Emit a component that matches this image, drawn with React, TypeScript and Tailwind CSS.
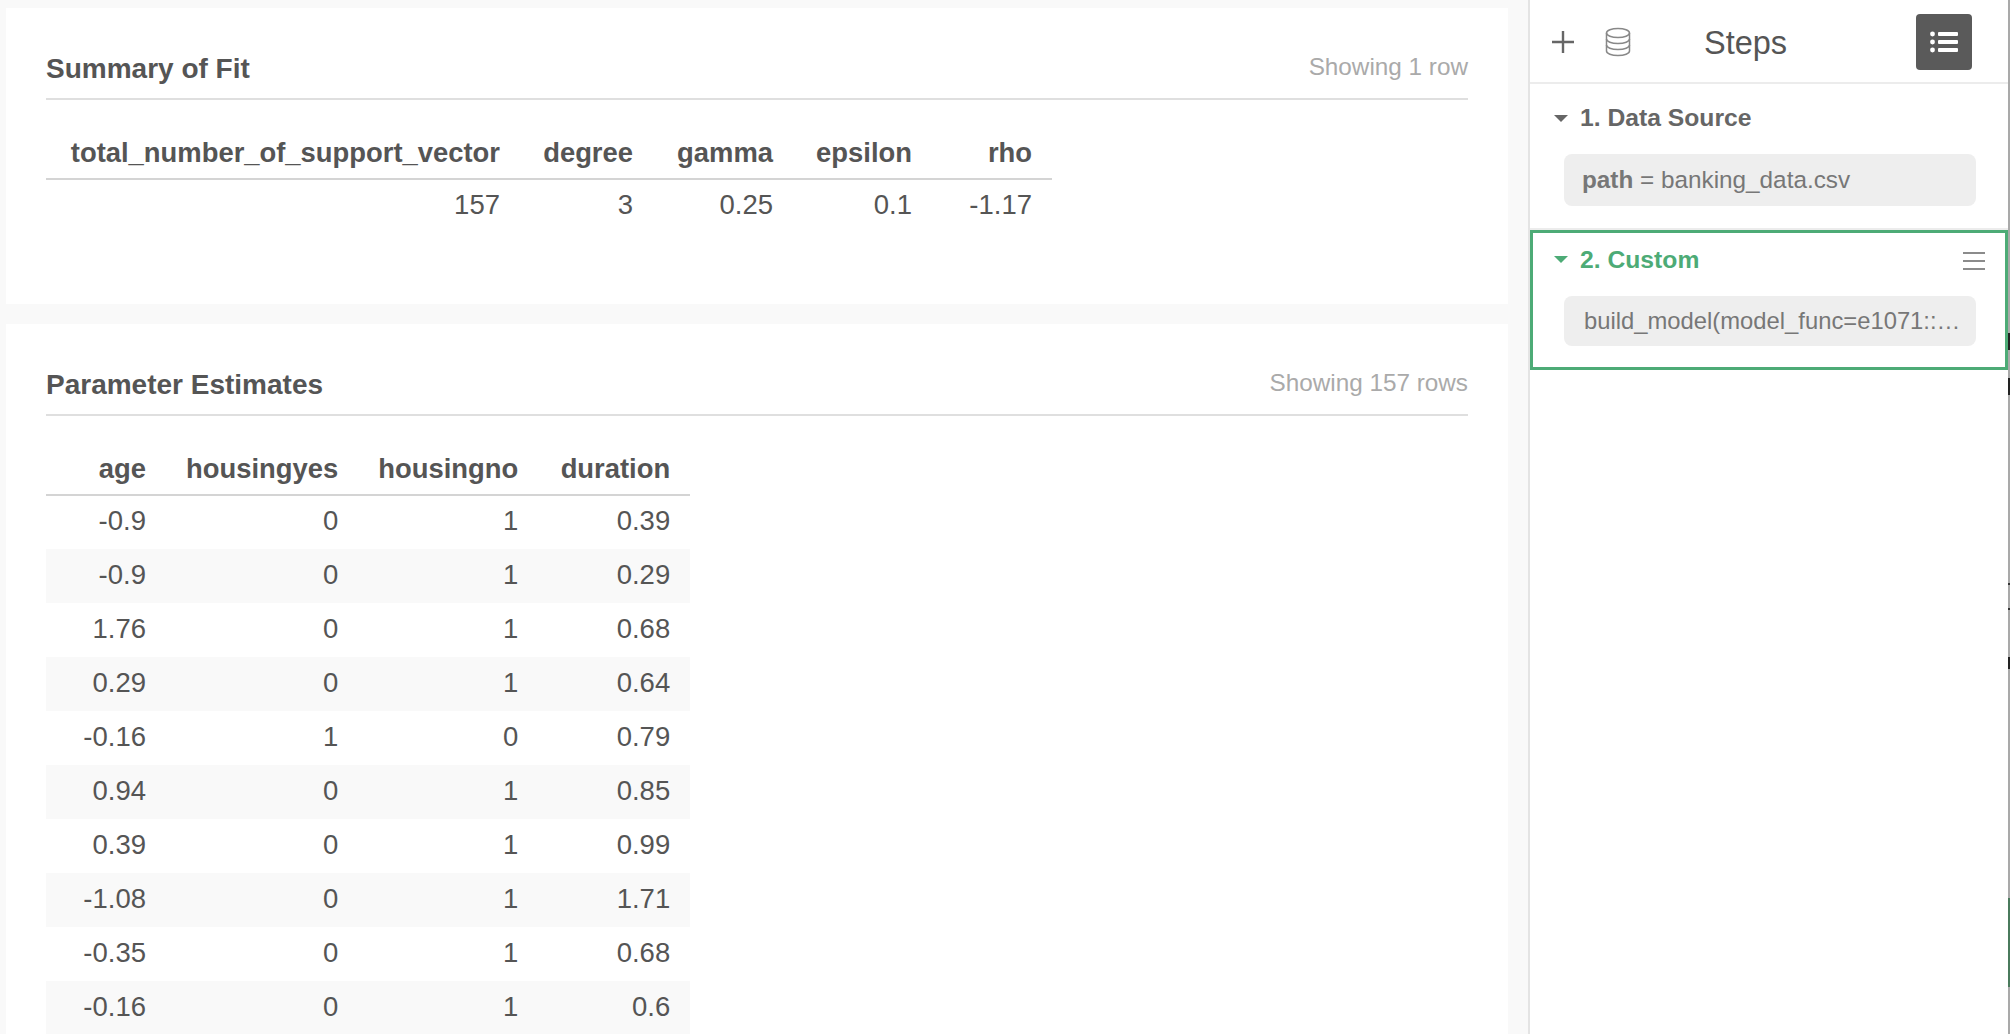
type Row = string[];
type Col = { label: string; width: string };

const fitHead: Col[] = [
  { label: "total_number_of_support_vector", width: "w-[474px]" },
  { label: "degree", width: "w-[133px]" },
  { label: "gamma", width: "w-[140px]" },
  { label: "epsilon", width: "w-[139px]" },
  { label: "rho", width: "w-[120px]" },
];
const fitRows: Row[] = [["157", "3", "0.25", "0.1", "-1.17"]];
const estHead: Col[] = [
  { label: "age", width: "w-[120px]" },
  { label: "housingyes", width: "w-[192px]" },
  { label: "housingno", width: "w-[180px]" },
  { label: "duration", width: "w-[152px]" },
];
const estRows: Row[] = [
  ["-0.9", "0", "1", "0.39"],
  ["-0.9", "0", "1", "0.29"],
  ["1.76", "0", "1", "0.68"],
  ["0.29", "0", "1", "0.64"],
  ["-0.16", "1", "0", "0.79"],
  ["0.94", "0", "1", "0.85"],
  ["0.39", "0", "1", "0.99"],
  ["-1.08", "0", "1", "1.71"],
  ["-0.35", "0", "1", "0.68"],
  ["-0.16", "0", "1", "0.6"],
];

function DataTable({ head, rows }: { head: Col[]; rows: Row[] }) {
  return (
    <table className="border-collapse text-right text-[#555]">
      <thead>
        <tr className="border-b-2 border-[#d4d4d4]">
          {head.map((h) => (
            <th key={h.label} className={`h-[52px] px-5 pt-px text-[27.4px] font-bold ${h.width}`}>
              {h.label}
            </th>
          ))}
        </tr>
      </thead>
      <tbody>
        {rows.map((r, i) => (
          <tr key={i} className={i % 2 === 1 ? "bg-[#f9f9f9]" : "bg-white"}>
            {r.map((c, j) => (
              <td key={j} className="h-[54px] px-5 pb-[3px] text-[27.5px] font-normal">
                {c}
              </td>
            ))}
          </tr>
        ))}
      </tbody>
    </table>
  );
}

function Card({ title, note, className, children }: { title: string; note: string; className: string; children: React.ReactNode }) {
  return (
    <section className={`ml-1.5 w-[1502px] bg-white px-10 pt-[33px] ${className}`}>
      <div className="flex h-[59px] items-center justify-between border-b-2 border-[#dfdfdf]">
        <h2 className="pb-[2px] text-[28px] font-bold text-[#555]">{title}</h2>
        <span className="pb-[5px] text-[24.3px] text-[#aaa]">{note}</span>
      </div>
      <div className="mt-[27px]">{children}</div>
    </section>
  );
}

function Caret({ color }: { color: string }) {
  return (
    <svg width="14" height="7" viewBox="0 0 14 7" className="shrink-0">
      <path d="M0 0h14L7 7z" fill={color} />
    </svg>
  );
}

export default function App() {
  return (
    <div
      className="flex h-[1034px] w-[2010px] overflow-hidden bg-[#f9f9f9]"
      style={{ fontFamily: '"Liberation Sans", Arial, sans-serif' }}
    >
      <main className="w-[1528px] shrink-0 pt-2">
        <Card title="Summary of Fit" note="Showing 1 row" className="h-[296px]">
          <DataTable head={fitHead} rows={fitRows} />
        </Card>
        <Card title="Parameter Estimates" note="Showing 157 rows" className="mt-5 h-[710px]">
          <DataTable head={estHead} rows={estRows} />
        </Card>
      </main>
      <aside className="relative h-full w-[482px] shrink-0 border-x-2 border-l-[#e4e4e4] border-r-[#a9a9a9] bg-white">
        <header className="flex h-[84px] items-center border-b-2 border-[#ececec] pl-[22px] pr-[36px] pt-[2px]">
          <svg width="22" height="22" viewBox="0 0 22 22" fill="none" stroke="#666" strokeWidth="2.4">
            <path d="M11 0v22M0 11h22" />
          </svg>
          <svg width="26" height="30" viewBox="0 0 26 30" fill="none" stroke="#888" strokeWidth="1.5" className="ml-[31px]">
            <ellipse cx="13" cy="6" rx="11.5" ry="4.5" />
            <path d="M1.5 6v18c0 2.5 5 4.5 11.5 4.5s11.5-2 11.5-4.5V6" />
            <path d="M1.5 12c0 2.5 5 4.5 11.5 4.5s11.5-2 11.5-4.5" />
            <path d="M1.5 18c0 2.5 5 4.5 11.5 4.5s11.5-2 11.5-4.5" />
          </svg>
          <span className="ml-[73px] pt-[2px] text-[32.5px] text-[#555]">Steps</span>
          <button className="ml-auto flex size-14 items-center justify-center rounded-[4px] bg-[#5a5a5a]">
            <svg width="28" height="22" viewBox="0 0 28 22" fill="#fff">
              <circle cx="2.5" cy="3" r="2.4" />
              <circle cx="2.5" cy="11" r="2.4" />
              <circle cx="2.5" cy="19" r="2.4" />
              <rect x="8" y="1" width="20" height="4" rx="1" />
              <rect x="8" y="9" width="20" height="4" rx="1" />
              <rect x="8" y="17" width="20" height="4" rx="1" />
            </svg>
          </button>
        </header>
        <div className="h-[146px] border-b-2 border-[#ececec] pl-[24px] pr-[32px]">
          <div className="flex h-[70px] items-center gap-3 pb-[4px] pt-[2px]">
            <Caret color="#666" />
            <span className="text-[24.7px] font-bold text-[#666]">1. Data Source</span>
          </div>
          <div className="ml-[10px] flex h-[52px] items-center rounded-lg bg-[#eee] pl-[18px] text-[24.3px] text-[#777]">
            <b className="font-bold">path</b>
            <span>&nbsp;= banking_data.csv</span>
          </div>
        </div>
        <div className="h-[140px] border-[3px] border-[#4dab76] pl-[21px] pr-[29px]">
          <div className="flex h-[63px] items-center gap-3 pb-[10px]">
            <Caret color="#4dab76" />
            <span className="text-[24.7px] font-bold text-[#4dab76]">2. Custom</span>
            <svg width="22" height="18" viewBox="0 0 22 18" stroke="#666" strokeWidth="1.4" className="-mr-[9px] ml-auto mt-[2px]">
              <path d="M0 1h22M0 9h22M0 17h22" />
            </svg>
          </div>
          <div className="ml-[10px] flex h-[50px] items-center rounded-lg bg-[#eee] pl-[20px] pr-[8px] text-[23.8px] text-[#777]">
            <span className="truncate">build_model(model_func=e1071::svm, formula=y ~ .)</span>
          </div>
        </div>
        <div className="absolute -right-[2px] top-[333px] h-[17px] w-[2px] bg-[#222]" />
        <div className="absolute -right-[2px] top-[378px] h-[17px] w-[2px] bg-[#222]" />
        <div className="absolute -right-[2px] top-[583px] h-[2px] w-[2px] bg-[#333]" />
        <div className="absolute -right-[2px] top-[608px] h-[2px] w-[2px] bg-[#333]" />
        <div className="absolute -right-[2px] top-[657px] h-[12px] w-[2px] bg-[#222]" />
        <div className="absolute -right-[2px] top-[898px] h-[89px] w-[2px] bg-[#4a7a5c]" />
      </aside>
    </div>
  );
}
